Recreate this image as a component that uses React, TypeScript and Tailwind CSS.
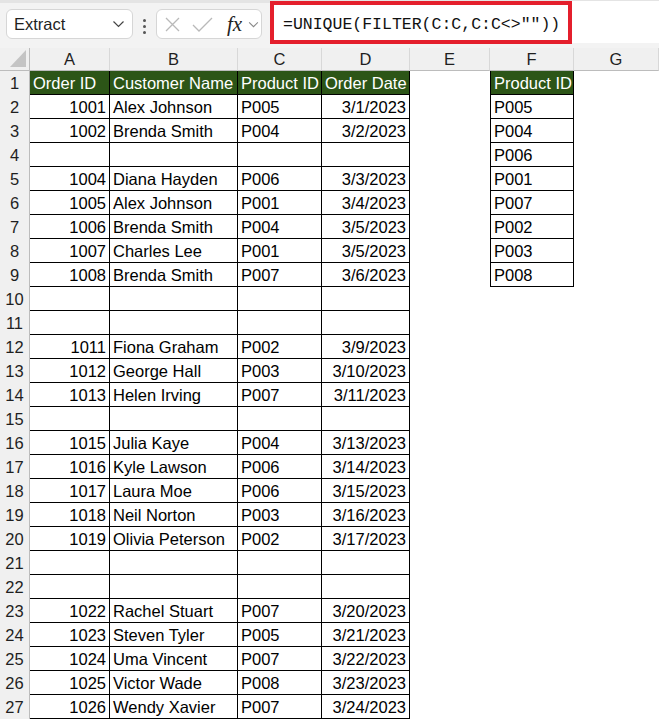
import React from 'react'

type Row = [string, string, string, string] | null

const rows: Row[] = [
  ['1001', 'Alex Johnson', 'P005', '3/1/2023'],
  ['1002', 'Brenda Smith', 'P004', '3/2/2023'],
  null,
  ['1004', 'Diana Hayden', 'P006', '3/3/2023'],
  ['1005', 'Alex Johnson', 'P001', '3/4/2023'],
  ['1006', 'Brenda Smith', 'P004', '3/5/2023'],
  ['1007', 'Charles Lee', 'P001', '3/5/2023'],
  ['1008', 'Brenda Smith', 'P007', '3/6/2023'],
  null,
  null,
  ['1011', 'Fiona Graham', 'P002', '3/9/2023'],
  ['1012', 'George Hall', 'P003', '3/10/2023'],
  ['1013', 'Helen Irving', 'P007', '3/11/2023'],
  null,
  ['1015', 'Julia Kaye', 'P004', '3/13/2023'],
  ['1016', 'Kyle Lawson', 'P006', '3/14/2023'],
  ['1017', 'Laura Moe', 'P006', '3/15/2023'],
  ['1018', 'Neil Norton', 'P003', '3/16/2023'],
  ['1019', 'Olivia Peterson', 'P002', '3/17/2023'],
  null,
  null,
  ['1022', 'Rachel Stuart', 'P007', '3/20/2023'],
  ['1023', 'Steven Tyler', 'P005', '3/21/2023'],
  ['1024', 'Uma Vincent', 'P007', '3/22/2023'],
  ['1025', 'Victor Wade', 'P008', '3/23/2023'],
  ['1026', 'Wendy Xavier', 'P007', '3/24/2023'],
]

// F 列：UNIQUE 结果
const unique = ['P005', 'P004', 'P006', 'P001', 'P007', 'P002', 'P003', 'P008']

const cols = ['A', 'B', 'C', 'D', 'E', 'F', 'G']
const green = 'bg-[#2c5517] text-white'

function Chevron({ className }: { className?: string }) {
  return (
    <svg className={className} viewBox="0 0 12 8" fill="none" stroke="currentColor" strokeWidth={1.2}>
      <path d="M1 1.5l5 5 5-5" />
    </svg>
  )
}

function Toolbar() {
  return (
    <div className="h-[48px] bg-[#f3f3f3] border-t-[3px] border-[#e4e4e4] flex items-start relative">
      {/* 名称框 */}
      <div className="mt-[6px] ml-[6px] w-[127px] h-[30px] bg-white border border-[#d6d6d6] rounded-[6px] flex items-center pl-[7px] pr-[7px]">
        <span className="text-[16.5px] text-[#1f1f1f] flex-1">Extract</span>
        <Chevron className="w-[13px] h-[8px] text-[#444]" />
      </div>
      <div className="mt-[16px] ml-[10px] flex flex-col gap-[3px]">
        <span className="w-[3px] h-[3px] bg-[#555] rounded-full" />
        <span className="w-[3px] h-[3px] bg-[#555] rounded-full" />
        <span className="w-[3px] h-[3px] bg-[#555] rounded-full" />
      </div>
      {/* 取消 / 确认 / fx */}
      <div className="mt-[6px] ml-[10px] w-[106px] h-[30px] bg-white border border-[#d6d6d6] rounded-[6px] flex items-center pl-[8px]">
        <svg className="w-[15px] h-[15px] text-[#b9b9b9]" viewBox="0 0 15 15" fill="none" stroke="currentColor" strokeWidth={1.3}>
          <path d="M1 1l13 13M14 1L1 14" />
        </svg>
        <svg className="ml-[12px] w-[21px] h-[15px] text-[#b9b9b9]" viewBox="0 0 21 15" fill="none" stroke="currentColor" strokeWidth={1.3}>
          <path d="M1 8l6 6L20 1" />
        </svg>
        <span className="ml-[14px] text-[21px] italic text-[#222] leading-none" style={{ fontFamily: '"Liberation Serif", serif' }}>
          fx
        </span>
        <Chevron className="ml-[6px] w-[11px] h-[7px] text-[#888]" />
      </div>
      {/* 编辑栏 */}
      <div className="ml-[8px] flex-1 h-[42px] bg-white relative -mt-[2px]">
        <div className="absolute left-0 top-0 w-[302px] h-[43px] border-[4px] border-[#e41f2c]" />
        <div
          className="pl-[13px] pt-[12px] text-[16.5px] text-[#111]"
          style={{ fontFamily: '"Liberation Mono", "DejaVu Sans Mono", monospace' }}
        >
          =UNIQUE(FILTER(C:C,C:C&lt;&gt;""))
        </div>
      </div>
    </div>
  )
}

export default function App() {
  return (
    <div className="w-[659px] h-[719px] overflow-hidden bg-white" style={{ fontFamily: '"Liberation Sans", Arial, sans-serif' }}>
      <Toolbar />
      <div className="grid grid-cols-[30px_80px_128px_84px_88px_80px_84px_85px] grid-rows-[23px] auto-rows-[24px] text-[16.5px] leading-none">
        {/* 列头 */}
        <div className="bg-[#f0f0f0] border-r border-b border-[#bcbcbc] flex items-end justify-end pr-[3px] pb-[3px]">
          <svg className="w-[16px] h-[17px]" viewBox="0 0 16 17">
            <polygon points="16,0 16,17 0,17" fill="#c4c4c4" />
          </svg>
        </div>
        {cols.map((c) => (
          <div key={c} className="bg-[#f0f0f0] border-r border-b border-r-[#d8d8d8] border-b-[#bcbcbc] flex items-center justify-center text-[#1f1f1f]">
            {c}
          </div>
        ))}

        {/* 第 1 行：表头 */}
        <div className="bg-[#f0f0f0] border-r border-[#bcbcbc] flex items-center justify-center text-[#1f1f1f]">1</div>
        {['Order ID', 'Customer Name', 'Product ID', 'Order Date'].map((h) => (
          <div key={h} className={`${green} border-r border-b border-black flex items-center pl-[3px] pt-[1px] whitespace-nowrap overflow-hidden`}>
            {h}
          </div>
        ))}
        <div />
        <div className={`${green} border-l border-r border-b border-black flex items-center pl-[3px] pt-[1px] whitespace-nowrap`}>Product ID</div>
        <div />

        {rows.map((r, i) => {
          const n = i + 2
          const u = unique[i]
          return (
            <React.Fragment key={n}>
              <div className="bg-[#f0f0f0] border-r border-[#bcbcbc] flex items-center justify-center text-[#1f1f1f]">{n}</div>
              <div className="border-r border-b border-black flex items-center justify-end pr-[3px] pt-[1px]">{r?.[0]}</div>
              <div className="border-r border-b border-black flex items-center pl-[3px] pt-[1px] whitespace-nowrap">{r?.[1]}</div>
              <div className="border-r border-b border-black flex items-center pl-[3px] pt-[1px]">{r?.[2]}</div>
              <div className="border-r border-b border-black flex items-center justify-end pr-[3px] pt-[1px]">{r?.[3]}</div>
              <div />
              {u ? (
                <div className="border-l border-r border-b border-black flex items-center pl-[3px] pt-[1px]">{u}</div>
              ) : (
                <div />
              )}
              <div />
            </React.Fragment>
          )
        })}
      </div>
    </div>
  )
}
